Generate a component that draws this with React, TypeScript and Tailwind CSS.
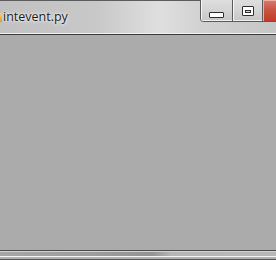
export default function App() {
  return (
    <div className="relative w-[276px] h-[260px] overflow-hidden flex flex-col bg-[#ababab] font-['Open_Sans',sans-serif]">
      {/* window frame top */}
      <div className="h-px bg-[#5c5c5c]" />
      <div className="h-[32px] flex items-start bg-[linear-gradient(90deg,#c1c1c1_0%,#c8c8c8_35%,#dfdfdf_58%,#d2d2d2_72%,#c6c6c6_100%)]">
        <div className="mt-[12px] w-[2px] h-[9px] bg-[linear-gradient(180deg,#f3d25a,#d89a1c)]" />
        <span className="ml-[1px] mt-[8px] text-[12.5px] leading-[16px] text-[#1b1b1b] [text-shadow:0_0_4px_#ffffff,0_0_2px_#ffffff]">
          intevent.py
        </span>
      </div>
      <div className="h-px bg-[#f2f2f2]" />
      <div className="h-px bg-[#3a3a3a]" />

      {/* client area */}
      <div className="flex-1 bg-[#ababab]" />

      {/* bottom frame */}
      <div className="h-px bg-[#4a4a4a]" />
      <div className="h-px bg-[#d2d2d2]" />
      <div className="h-[4px] bg-[linear-gradient(90deg,#a6a6a6_0%,#9c9c9c_35%,#939393_55%,#b5b5b5_62%,#b8b8b8_100%)]" />
      <div className="h-px bg-[#f4f4f4]" />
      <div className="h-[2px] bg-[#b0b0b0]" />
      <div className="h-px bg-[#555555]" />

      {/* caption buttons */}
      <div className="absolute top-0 left-[200px] flex h-[22px] border border-t-0 border-[#5a5a5a] rounded-bl-[4px] overflow-hidden">
        <div className="w-[32px] h-full flex items-start justify-center border-r border-[#5a5a5a] shadow-[inset_1px_0_0_#f5f5f5,inset_0_-1px_0_#f0f0f0] bg-[linear-gradient(180deg,#dedede_0%,#d4d4d4_50%,#c6c6c6_100%)]">
          <div className="mt-[12px] w-[15px] h-[6px] bg-white border border-[#2e2e2e] rounded-[1px]" />
        </div>
        <div className="w-[30px] h-full flex items-start justify-center border-r border-[#5a5a5a] shadow-[inset_1px_0_0_#f5f5f5,inset_0_-1px_0_#f0f0f0] bg-[linear-gradient(180deg,#dedede_0%,#d4d4d4_50%,#c6c6c6_100%)]">
          <div className="mt-[6px] w-[12px] h-[10px] bg-white border border-[#2e2e2e] rounded-[1px] p-[2px] pt-[3px]">
            <div className="w-full h-full border border-[#2e2e2e] bg-[#d8d8d8]" />
          </div>
        </div>
        <div className="w-[20px] h-full shadow-[inset_1px_1px_0_#f0b0a8] bg-[linear-gradient(180deg,#d97b6e_0%,#c95444_45%,#c23b2a_100%)]" />
      </div>
    </div>
  );
}
